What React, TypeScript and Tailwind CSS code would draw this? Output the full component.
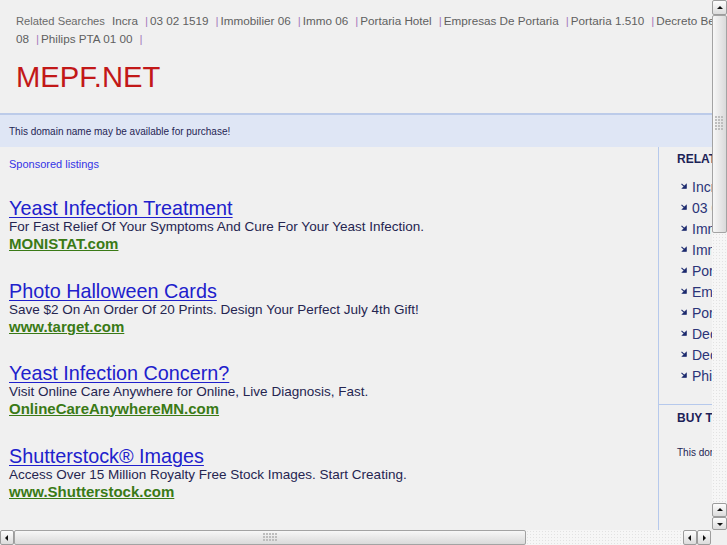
import React from 'react';

const searches = [
    'Incra',
    '03 02 1519',
    'Immobilier 06',
    'Immo 06',
    'Portaria Hotel',
    'Empresas De Portaria',
    'Portaria 1.510',
    'Decreto Bezerra',
];

const sideLinks = [
    'Incra',
    '03 02 1519',
    'Immobilier 06',
    'Immo 06',
    'Portaria Hotel',
    'Empresas De Portaria',
    'Portaria 1.510',
    'Decreto Bezerra',
    'Decreto 08',
    'Philips PTA 01 00',
];

const ads = [
    {
        title: 'Yeast Infection Treatment',
        desc: 'For Fast Relief Of Your Symptoms And Cure For Your Yeast Infection.',
        url: 'MONISTAT.com',
    },
    {
        title: 'Photo Halloween Cards',
        desc: 'Save $2 On An Order Of 20 Prints. Design Your Perfect July 4th Gift!',
        url: 'www.target.com',
    },
    {
        title: 'Yeast Infection Concern?',
        desc: 'Visit Online Care Anywhere for Online, Live Diagnosis, Fast.',
        url: 'OnlineCareAnywhereMN.com',
    },
    {
        title: 'Shutterstock® Images',
        desc: 'Access Over 15 Million Royalty Free Stock Images. Start Creating.',
        url: 'www.Shutterstock.com',
    },
];

function Pipe() {
    return <span className="ml-[7px] mr-[2px] text-[#a77bbd]">|</span>;
}

function ArrowBullet() {
    return (
        <svg width="6" height="6" viewBox="0 0 6 6" className="shrink-0">
            <path d="M0.5 0.8 L4 4.2 M5.2 1.6 L5.2 5.2 L1.6 5.2 Z" stroke="#1c2a6e" strokeWidth="1.1" fill="#1c2a6e" />
        </svg>
    );
}

type Dir = 'up' | 'down' | 'left' | 'right';

function ScrollButton({ dir, className = '' }: { dir: Dir; className?: string }) {
    const tri = {
        up: '2,6 5,3 8,6',
        down: '2,4 5,7 8,4',
        left: '6,2 3,5 6,8',
        right: '4,2 7,5 4,8',
    }[dir];
    return (
        <div className={`flex items-center justify-center border border-[#9c9c9c] rounded-[2px] bg-gradient-to-b from-[#fdfdfd] to-[#dcdcdc] ${className}`}>
            <svg width="10" height="10" viewBox="0 0 10 10">
                <polygon points={tri} fill="#111" />
            </svg>
        </div>
    );
}

function Grip({ vertical }: { vertical: boolean }) {
    const cols = vertical ? 3 : 5;
    const rows = vertical ? 5 : 3;
    const dots = [];
    for (let r = 0; r < rows; r++) {
        for (let c = 0; c < cols; c++) {
            dots.push(<rect key={`${r}-${c}`} x={c * 3} y={r * 3} width="2" height="2" fill="#bdbdbd" />);
        }
    }
    return (
        <svg width={cols * 3} height={rows * 3}>
            {dots}
        </svg>
    );
}

const dotted = 'bg-[#f6f6f6] bg-[radial-gradient(#e2e2e2_0.8px,transparent_0.8px)] bg-[length:3px_3px]';

export default function App() {
    return (
        <div className="w-[727px] h-[545px] overflow-hidden bg-[#f0f0f0] flex flex-col" style={{ fontFamily: '"Liberation Sans", Arial, sans-serif' }}>
            <div className="flex h-[530px]">
                {/* Page viewport */}
                <div className="w-[712px] h-[530px] overflow-hidden">
                    <div className="w-[940px] h-[530px] flex flex-col">
                        {/* Related searches */}
                        <div className="pl-[16px] pt-[11px] leading-[18px] text-[#606060]">
                            <div className="whitespace-nowrap">
                                <span className="text-[11.2px] text-[#6a6a6a] mr-[7px]">Related Searches</span>
                                {searches.map((s, i) => (
                                    <span key={s} className="text-[11.7px]">
                                        {i > 0 && <Pipe />}
                                        {s}
                                    </span>
                                ))}
                                <span className="text-[11.7px]"><Pipe />Decreto</span>
                            </div>
                            <div className="whitespace-nowrap text-[11.7px]">
                                08<Pipe />Philips PTA 01 00<Pipe />
                            </div>
                        </div>

                        <div className="pl-[16px] mt-[13px] text-[29.2px] leading-[32px] text-[#c21818]">MEPF.NET</div>

                        {/* Banner */}
                        <div className="mt-[20px] h-[34px] border-t-2 border-[#bccbe9] bg-[#dfe6f5] pl-[9px] flex items-center text-[10px] text-[#1f2554]">
                            This domain name may be available for purchase!
                        </div>

                        <div className="flex flex-1">
                            {/* Left listings */}
                            <div className="w-[658px] pl-[9px] pt-[10px]">
                                <div className="text-[11px] leading-[14px] text-[#3333e6]">Sponsored listings</div>
                                <div className="mt-[27px] flex flex-col gap-[28.5px]">
                                    {ads.map(ad => (
                                        <div key={ad.title} className="flex flex-col">
                                            <a className="text-[19.8px] leading-[20px] text-[#2020cc] underline underline-offset-[2px] decoration-1">{ad.title}</a>
                                            <div className="text-[13.5px] leading-[17px] text-[#252550]">{ad.desc}</div>
                                            <a className="text-[15px] leading-[17px] font-bold text-[#3a7a16] underline underline-offset-[1px] decoration-1">{ad.url}</a>
                                        </div>
                                    ))}
                                </div>
                            </div>

                            {/* Right column */}
                            <div className="flex-1 border-l border-[#b6c9ec]">
                                <div className="pl-[18px] pt-[5px]">
                                    <div className="text-[12px] leading-[14px] font-bold text-[#1c2257]">RELATED SEARCHES</div>
                                    <ul className="mt-[11px] pl-[4px]">
                                        {sideLinks.map(l => (
                                            <li key={l} className="flex items-center gap-[5px] h-[21px] text-[14px] text-[#2b3478]">
                                                <span className="-mt-[3px]"><ArrowBullet /></span>
                                                <span className="whitespace-nowrap">{l}</span>
                                            </li>
                                        ))}
                                    </ul>
                                </div>
                                <div className="mt-[17px] border-t border-[#b6c9ec] pl-[18px] pt-[6px]">
                                    <div className="text-[12px] leading-[14px] font-bold text-[#1c2257]">BUY THIS DOMAIN</div>
                                    <div className="mt-[22px] text-[10px] leading-[12px] text-[#1f2554] whitespace-nowrap">This domain name may be available for purchase!</div>
                                </div>
                            </div>
                        </div>
                    </div>
                </div>

                {/* Vertical scrollbar */}
                <div className="w-[15px] h-[530px] flex flex-col">
                    <ScrollButton dir="up" className="h-[15px]" />
                    <div className="h-[218px] border border-[#a3a3a3] rounded-[2px] bg-gradient-to-r from-[#f7f7f7] to-[#dadada] flex justify-center pt-[100px]">
                        <Grip vertical />
                    </div>
                    <div className={`flex-1 ${dotted}`} />
                    <ScrollButton dir="up" className="h-[14px]" />
                    <ScrollButton dir="down" className="h-[13px]" />
                </div>
            </div>

            {/* Horizontal scrollbar */}
            <div className="h-[15px] flex">
                <ScrollButton dir="left" className="w-[14px]" />
                <div className="w-[512px] border border-[#a3a3a3] rounded-[2px] bg-gradient-to-b from-[#f7f7f7] to-[#dadada] flex items-center justify-center">
                    <Grip vertical={false} />
                </div>
                <div className={`w-[157px] ${dotted}`} />
                <ScrollButton dir="left" className="w-[14px]" />
                <ScrollButton dir="right" className="w-[14px]" />
                <div className="flex-1 bg-[#f0f0f0]" />
            </div>
        </div>
    );
}
